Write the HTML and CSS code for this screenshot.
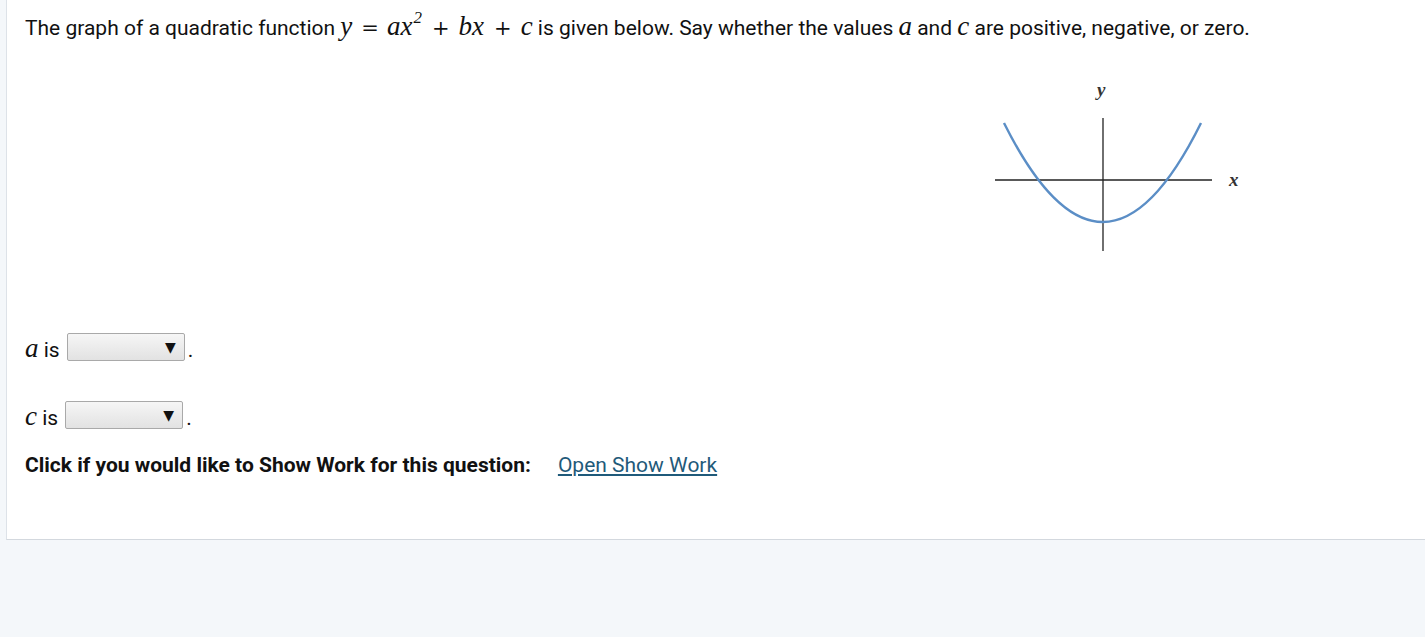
FILE: index.html
```html
<!DOCTYPE html>
<html>
<head>
<meta charset="utf-8">
<link rel="stylesheet" href="styles.css">
</head>
<body>
<div class="panel">
  <p class="question">The graph of a quadratic function <span class="math">y</span><span class="op eq">=</span><span class="math">ax<sup>2</sup></span><span class="op">+</span><span class="math">bx</span><span class="op">+</span><span class="math">c</span> is given below. Say whether the values <span class="math">a</span> and <span class="math">c</span> are positive, negative, or zero.</p>
  <div class="graph">
    <svg width="260" height="184" viewBox="0 0 260 184">
      <text x="103" y="22" class="lbl">y</text>
      <text x="235" y="112" class="lbl">x</text>
      <line x1="1" y1="106" x2="218" y2="106" stroke="#222" stroke-width="1.3"/>
      <line x1="109" y1="44" x2="109" y2="177" stroke="#222" stroke-width="1.3"/>
      <path d="M10 49 Q109 247 207 49" fill="none" stroke="#5b8ec6" stroke-width="2.4"/>
    </svg>
  </div>
  <div class="answer a-row"><span class="label"><span class="math">a</span> is</span><span class="select"><span class="arrow">▼</span></span><span class="dot">.</span></div>
  <div class="answer c-row"><span class="label"><span class="math">c</span> is</span><span class="select"><span class="arrow">▼</span></span><span class="dot">.</span></div>
  <div class="showwork"><b>Click if you would like to Show Work for this question:</b><a href="#" class="link">Open Show Work</a></div>
</div>
</body>
</html>
```
FILE: styles.css
```css
html, body {
  margin: 0;
  padding: 0;
}
body {
  background: #f4f7fa;
  font-family: Roboto, "Liberation Sans", sans-serif;
  color: #111;
  height: 637px;
  overflow: hidden;
}
.panel {
  margin-left: 6px;
  background: #fff;
  border-left: 1px solid #dde2e8;
  border-bottom: 1px solid #d3d8de;
  height: 540px;
  box-sizing: border-box;
  padding: 14px 0 0 18px;
}
.question {
  margin: 0;
  font-size: 21px;
  line-height: 28px;
  white-space: nowrap;
}
.math {
  font-family: "Liberation Serif", "Times New Roman", serif;
  font-style: italic;
  font-size: 27px;
  line-height: 20px;
}
.op {
  font-family: "DejaVu Serif", serif;
  font-size: 21px;
  line-height: 20px;
  margin: 0 9px 0 10px;
}
.op.eq {
  margin: 0 8px 0 9px;
}
.math sup {
  font-size: 17px;
  vertical-align: 0;
  position: relative;
  top: -12px;
  margin-left: 1px;
}
.graph {
  margin: 32px 0 0 969px;
  height: 184px;
}
.graph svg {
  display: block;
}
.lbl {
  font-family: "Liberation Serif", serif;
  font-style: italic;
  font-weight: bold;
  font-size: 19px;
  fill: #333;
}
.answer {
  display: flex;
  align-items: center;
  height: 28px;
  font-size: 21px;
}
.label, .dot {
  line-height: 28px;
  margin-top: 6px;
  white-space: nowrap;
}
.a-row {
  margin-top: 75px;
}
.c-row {
  margin-top: 40px;
}
.select {
  display: block;
  width: 118px;
  height: 28px;
  box-sizing: border-box;
  border: 1px solid #a9a9a9;
  border-radius: 2px;
  background: linear-gradient(#f6f6f6, #e2e2e2);
  margin-left: 7px;
  margin-right: 3px;
  position: relative;
}
.c-row .select {
  margin-left: 7px;
}
.arrow {
  position: absolute;
  right: 8px;
  top: 0;
  font-family: "DejaVu Sans", sans-serif;
  font-size: 14px;
  line-height: 26px;
  color: #111;
}
.showwork {
  margin-top: 22px;
  font-size: 21px;
  line-height: 28px;
}
.showwork b {
  font-weight: bold;
}
.link {
  margin-left: 27px;
  color: #1f5a7a;
  text-decoration: underline;
}
```
